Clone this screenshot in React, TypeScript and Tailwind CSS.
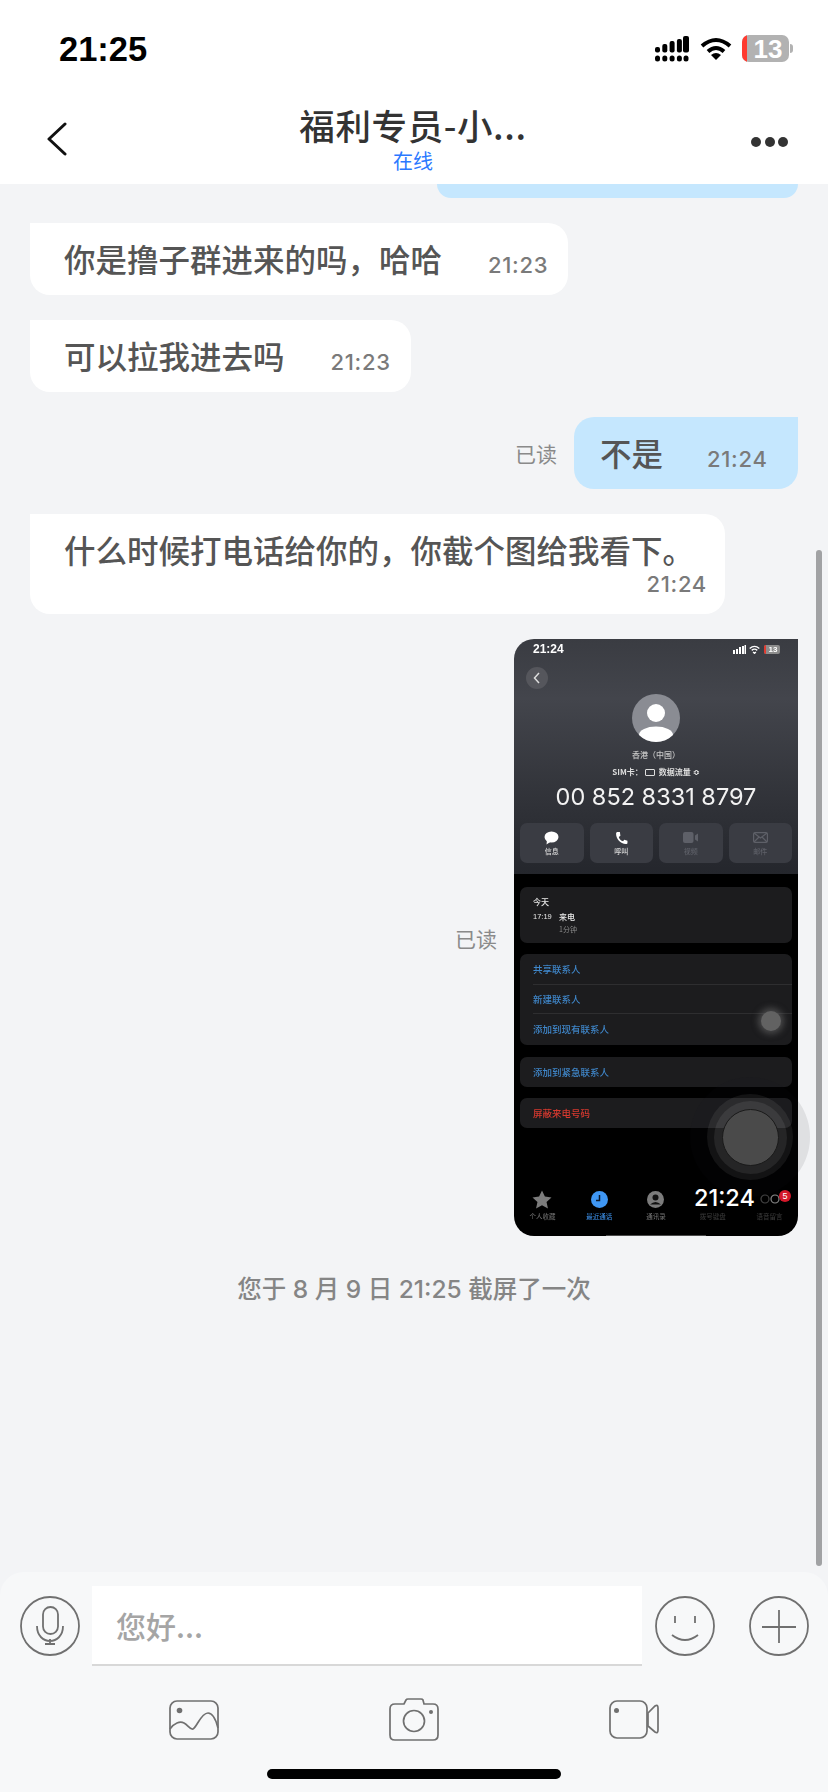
import React from "react";

const cjk = "font-['Noto_Sans_CJK_SC','Liberation_Sans',sans-serif]";

function Signal() {
  return (
    <svg width="34" height="26" viewBox="0 0 34 26" fill="#000">
      <rect x="0" y="11" width="5" height="5.5" rx="2" />
      <rect x="7.3" y="8" width="5" height="8.5" rx="2" />
      <rect x="14.6" y="5" width="5" height="11.5" rx="2" />
      <rect x="21.9" y="3" width="5" height="13.5" rx="2" />
      <rect x="28" y="0" width="6" height="16.5" rx="2" />
      <rect x="0" y="19.5" width="5" height="6" rx="2.5" />
      <rect x="7.3" y="19.5" width="5" height="6" rx="2.5" />
      <rect x="14.6" y="19.5" width="5" height="6" rx="2.5" />
      <rect x="21.9" y="19.5" width="5" height="6" rx="2.5" />
      <rect x="28.5" y="19.5" width="5" height="6" rx="2.5" />
    </svg>
  );
}

function Wifi() {
  return (
    <svg width="32" height="24" viewBox="0 0 32 24" fill="none" stroke="#000" strokeWidth="4">
      <path d="M2 9 Q16 -3 30 9" />
      <path d="M8 14.5 Q16 7.5 24 14.5" />
      <path d="M11 18 L16 23 L21 18 Q16 14 11 18 Z" fill="#000" stroke="none" />
    </svg>
  );
}

function Battery() {
  return (
    <div className="flex items-center gap-[1px]">
      <div className="flex h-[27px] w-[47px] overflow-hidden rounded-[7px] bg-[#b2b2b2]">
        <div className="h-full w-[5px] bg-[#ff3b30]" />
        <div className="flex flex-1 items-center justify-center font-['Liberation_Sans',sans-serif] text-[26px] font-bold leading-none text-white">
          13
        </div>
      </div>
      <div className="h-[9px] w-[3px] rounded-r-full bg-[#b2b2b2]" />
    </div>
  );
}

function Header() {
  return (
    <header className="h-[184px] shrink-0 bg-white">
      <div className="flex h-[100px] items-start justify-between pl-[59px] pr-[35px] pt-[35px]">
        <span className="font-['Liberation_Sans',sans-serif] text-[34.5px] font-bold leading-[28px] text-black">21:25</span>
        <div className="flex items-center">
          <Signal />
          <div className="ml-[11px] mr-[10px]">
            <Wifi />
          </div>
          <Battery />
        </div>
      </div>
      <div className="grid grid-cols-[1fr_auto_1fr] items-start pl-[41px] pr-[43px]">
        <svg width="22" height="34" viewBox="0 0 22 34" fill="none" stroke="#111" strokeWidth="3" strokeLinecap="round" strokeLinejoin="round" className="ml-[5px] mt-[22px]">
          <path d="M19 2 L3 17 L19 32" />
        </svg>
        <div className={`flex flex-col items-center ${cjk}`}>
          <div className="mt-[5px] text-[35.5px] font-medium leading-[40px] tracking-[0.6px] text-[#333333]">福利专员-小...</div>
          <div className="mt-[4px] text-[20px] leading-[24px] text-[#2a78ff]">在线</div>
        </div>
        <div className="-mr-[3px] mt-[37px] flex justify-end gap-[3.5px]">
          <span className="size-[10px] rounded-full bg-[#333333]" />
          <span className="size-[10px] rounded-full bg-[#333333]" />
          <span className="size-[10px] rounded-full bg-[#333333]" />
        </div>
      </div>
    </header>
  );
}

function Time({ children, className = "" }: { children: React.ReactNode; className?: string }) {
  return <span className={`font-['Inter','Liberation_Sans',sans-serif] text-[22px] font-medium leading-[24px] tracking-[0.7px] text-[#7a7a7a] ${className}`}>{children}</span>;
}

function LeftBubble({ text, time }: { text: string; time: string }) {
  return (
    <div className={`flex h-[72px] w-fit items-center rounded-[20px] rounded-tl-none bg-white pl-[34px] pr-[20px] ${cjk}`}>
      <span className="-mt-[2px] text-[31.5px] font-medium leading-[40px] text-[#555555]">{text}</span>
      <Time className="ml-[46px] mt-[12px]">{time}</Time>
    </div>
  );
}

function TabIcon({ label, active, faint, children }: { label: string; active?: boolean; faint?: boolean; children: React.ReactNode }) {
  return (
    <div className="flex w-[56.8px] flex-col items-center gap-[3px]">
      <div className="flex h-[20px] items-center justify-center">{children}</div>
      <span className={`text-[6.5px] leading-[9px] ${active ? "text-[#3f97f4]" : faint ? "text-[#3c3c3c]" : "text-[#777777]"}`}>{label}</span>
    </div>
  );
}

function ActionButton({ label, dim, children }: { label: string; dim?: boolean; children: React.ReactNode }) {
  return (
    <div className="flex h-[40px] flex-1 flex-col items-center justify-center gap-[2px] rounded-[7px] bg-[#3a3c43]">
      <div className="flex h-[15px] items-center justify-center">{children}</div>
      <span className={`text-[7px] font-medium leading-[9px] ${dim ? "text-[#5e6068]" : "text-[#dcdcdc]"}`}>{label}</span>
    </div>
  );
}

function Screenshot() {
  return (
    <div className="relative h-[597px] w-[284px]">
      <div className="h-full w-full overflow-hidden rounded-[20px] rounded-tr-none bg-[linear-gradient(180deg,#3a3c42_0,#43454c_60px,#303238_165px,#24262c_235px,#000000_235px)]">
        <div className={`flex h-full w-full flex-col blur-[0.4px] ${cjk}`}>
          <div className="flex h-[235px] shrink-0 flex-col px-[6px]">
            <div className="flex h-[17px] items-center justify-between pl-[13px] pr-[12px] pt-[3px]">
              <span className="font-['Liberation_Sans',sans-serif] text-[12px] font-bold leading-none text-white">21:24</span>
              <div className="flex items-center gap-[3px]">
                <svg width="13" height="9" viewBox="0 0 13 9" fill="#fff">
                  <rect x="0" y="5" width="2" height="4" /><rect x="3" y="4" width="2" height="5" /><rect x="6" y="2" width="2" height="7" /><rect x="9" y="1" width="2" height="8" /><rect x="11.5" y="0" width="1.5" height="9" />
                </svg>
                <svg width="11" height="9" viewBox="0 0 32 24" fill="none" stroke="#fff" strokeWidth="4"><path d="M2 9 Q16 -3 30 9" /><path d="M8 14.5 Q16 7.5 24 14.5" /><path d="M12 19 L16 23 L20 19" /></svg>
                <div className="ml-[1px] flex h-[9px] w-[16px] overflow-hidden rounded-[2px] bg-[#8d8d8d]">
                  <div className="h-full w-[2px] bg-[#e23a30]" />
                  <span className="flex-1 text-center font-['Liberation_Sans',sans-serif] text-[8px] font-bold leading-[9px] text-white">13</span>
                </div>
              </div>
            </div>
            <div className="ml-[6px] mt-[11px] flex size-[22px] items-center justify-center self-start rounded-full bg-[#55565c]">
              <svg width="8" height="12" viewBox="0 0 8 12" fill="none" stroke="#dddddd" strokeWidth="1.5"><path d="M6 1 L1.5 6 L6 11" /></svg>
            </div>
            <div className="mt-[5px] flex size-[48px] items-center justify-center self-center overflow-hidden rounded-full bg-[#8a8c93]">
              <svg width="48" height="48" viewBox="0 0 48 48" fill="#fff">
                <circle cx="24" cy="19" r="9" />
                <ellipse cx="24" cy="41" rx="17" ry="8.5" />
              </svg>
            </div>
            <div className="mt-[7px] text-center text-[8px] font-medium leading-[12px] text-[#c8c8c8]">香港（中国）</div>
            <div className="mt-[5px] flex items-center justify-center gap-[2px] text-[8px] font-bold leading-[12px] text-[#dedede]">
              <span>SIM卡：</span>
              <span className="h-[7px] w-[10px] rounded-[1px] border border-[#dedede]" />
              <span className="ml-[2px]">数据流量 ≎</span>
            </div>
            <div className="mt-[2px] text-center font-['Inter','Liberation_Sans',sans-serif] text-[23.5px] leading-[34px] text-[#f2f2f2]">00 852 8331 8797</div>
            <div className="mt-[9px] flex gap-[6px]">
              <ActionButton label="信息">
                <svg width="15" height="14" viewBox="0 0 15 14" fill="#fff"><ellipse cx="7.5" cy="6" rx="7" ry="5.5" /><path d="M3 9 L2.5 13.5 L7 10.5 Z" /></svg>
              </ActionButton>
              <ActionButton label="呼叫">
                <svg width="13" height="14" viewBox="0 0 24 24" fill="#fff"><path d="M5 1 L9 1 L10 8 L7 10 C8 14 11 17 15 18 L17 15 L23 17 L23 21 C23 22 22 23 20 23 C10 22 2 14 2 4 C2 2 3 1 5 1 Z" /></svg>
              </ActionButton>
              <ActionButton label="视频" dim>
                <svg width="15" height="11" viewBox="0 0 15 11" fill="#5e6068"><rect x="0" y="0" width="10.5" height="11" rx="2" /><path d="M12 3.5 L15 1.5 V9.5 L12 7.5 Z" /></svg>
              </ActionButton>
              <ActionButton label="邮件" dim>
                <svg width="15" height="11" viewBox="0 0 15 11" fill="none" stroke="#5e6068" strokeWidth="1.2"><rect x="0.6" y="0.6" width="13.8" height="9.8" rx="1.5" /><path d="M1 1 L7.5 6 L14 1 M1 10 L6 5 M14 10 L9 5" /></svg>
              </ActionButton>
            </div>
          </div>
          <div className="flex flex-1 flex-col px-[6px] pt-[13px]">
            <div className="h-[56px] rounded-[7px] bg-[#1c1c1e] pl-[13px] pt-[9px]">
              <div className="text-[8px] font-medium leading-[12px] text-[#e8e8e8]">今天</div>
              <div className="mt-[3px] flex items-center text-[7.5px] font-medium leading-[11px] text-[#e8e8e8]">
                <span className="w-[26px] font-['Liberation_Sans',sans-serif]">17:19</span>
                <span className="text-[8px]">来电</span>
              </div>
              <div className="ml-[26px] mt-[2px] text-[7px] leading-[10px] text-[#8a8a8a]">1分钟</div>
            </div>
            <div className="mt-[11px] flex h-[91px] flex-col rounded-[7px] bg-[#1c1c1e] pl-[13px] text-[9.5px] font-medium text-[#3f86c9]">
              <div className="flex h-[31px] items-center border-b border-[#2e2e30]">共享联系人</div>
              <div className="flex h-[29px] items-center border-b border-[#2e2e30]">新建联系人</div>
              <div className="flex h-[31px] items-center">添加到现有联系人</div>
            </div>
            <div className="mt-[12px] flex h-[30px] items-center rounded-[7px] bg-[#1c1c1e] pl-[13px] text-[9.5px] font-medium text-[#3f86c9]">添加到紧急联系人</div>
            <div className="mt-[11px] flex h-[30px] items-center rounded-[7px] bg-[#1c1c1e] pl-[13px] text-[9.5px] font-medium text-[#d5392f]">屏蔽来电号码</div>
            <div className="-mx-[6px] mt-[61px] flex justify-center">
              <TabIcon label="个人收藏">
                <svg width="20" height="19" viewBox="0 0 24 23" fill="#7c7c7c"><path d="M12 0.5 L15.5 8 L23.5 9 L17.5 14.5 L19.2 22.5 L12 18.5 L4.8 22.5 L6.5 14.5 L0.5 9 L8.5 8 Z" /></svg>
              </TabIcon>
              <TabIcon label="最近通话" active>
                <svg width="17" height="17" viewBox="0 0 17 17"><circle cx="8.5" cy="8.5" r="8.5" fill="#3f97f4" /><path d="M8.5 4 V9.5 H5" fill="none" stroke="#0b1a2c" strokeWidth="1.5" /></svg>
              </TabIcon>
              <TabIcon label="通讯录">
                <svg width="17" height="17" viewBox="0 0 17 17"><circle cx="8.5" cy="8.5" r="8.5" fill="#7c7c7c" /><circle cx="8.5" cy="6.5" r="3" fill="#111" /><path d="M3 13.5 Q8.5 8.5 14 13.5 Z" fill="#111" /></svg>
              </TabIcon>
              <TabIcon label="拨号键盘" faint>
                <span />
              </TabIcon>
              <TabIcon label="语音留言" faint>
                <svg width="20" height="10" viewBox="0 0 20 10" fill="none" stroke="#444" strokeWidth="1.2"><circle cx="5" cy="5" r="4" /><circle cx="15" cy="5" r="4" stroke="#888" /></svg>
              </TabIcon>
            </div>
            <div className="mx-auto mt-auto h-[1px] w-[100px] bg-[#4a4a4a]" />
          </div>
        </div>
      </div>
      <div className="absolute left-[247px] top-[372px] size-[20px] rounded-full bg-[#626262] shadow-[0_0_6px_3px_rgba(110,110,110,0.55)] blur-[0.5px]" />
      <div className="absolute left-[176px] top-[438px] flex size-[120px] items-center justify-center rounded-full bg-[rgba(20,20,35,0.09)]">
        <div className="flex size-[86px] items-center justify-center rounded-full bg-[rgba(255,255,255,0.07)]">
          <div className="flex size-[73px] items-center justify-center rounded-full bg-[rgba(255,255,255,0.08)]">
            <div className="size-[57px] rounded-full border border-[#1a1a1a] bg-[#4a4a4a]" />
          </div>
        </div>
      </div>
      <span className="absolute left-[180px] top-[544px] font-['Inter','Liberation_Sans',sans-serif] text-[23.5px] font-medium leading-[30px] text-white">21:24</span>
      <span className="absolute left-[265px] top-[551px] flex size-[12px] items-center justify-center rounded-full bg-[#d4182a] font-['Liberation_Sans',sans-serif] text-[9px] leading-none text-white">5</span>
    </div>
  );
}

function InputBar() {
  const stroke = "#707070";
  return (
    <footer className="flex h-[220px] shrink-0 flex-col rounded-t-[24px] bg-[#f7f8f9] pt-[14px]">
      <div className="flex items-start pl-[20px] pr-[21px]">
        <svg width="60" height="60" viewBox="0 0 60 60" fill="none" stroke={stroke} strokeWidth="1.8" className="mt-[10px] shrink-0">
          <circle cx="30" cy="30" r="29" />
          <rect x="23" y="11" width="15" height="27" rx="7.5" />
          <path d="M17 30 C17 50 43 50 43 30 M30 43 V48 M25 48 H35" />
        </svg>
        <div className={`ml-[12px] flex h-[80px] w-[550px] shrink-0 items-center border-b-2 border-[#d8d8d8] bg-white pl-[24px] text-[30px] font-medium text-[#a5a5a5] ${cjk}`}>您好...</div>
        <svg width="60" height="60" viewBox="0 0 60 60" fill="none" stroke={stroke} strokeWidth="1.8" className="ml-[13px] mt-[10px] shrink-0">
          <circle cx="30" cy="30" r="29" />
          <path d="M20 20 V27 M40 20 V27 M17 39 Q30 49 43 39" />
        </svg>
        <svg width="60" height="60" viewBox="0 0 60 60" fill="none" stroke={stroke} strokeWidth="1.8" className="ml-[34px] mt-[10px] shrink-0">
          <circle cx="30" cy="30" r="29" />
          <path d="M13 31 H47 M30 14 V47" />
        </svg>
      </div>
      <div className="mt-[32px] flex items-center justify-center gap-[170px]">
        <svg width="50" height="40" viewBox="0 0 50 40" fill="none" stroke={stroke} strokeWidth="1.7">
          <rect x="1" y="1" width="48" height="38" rx="7" />
          <circle cx="10.5" cy="10.5" r="2.8" fill={stroke} stroke="none" />
          <path d="M1 29 C5 23 11 21 15 23 C19 25 21 30 24 29 C28 27 32 13 39 13 C44 13 47 20 49 28" />
        </svg>
        <svg width="50" height="43" viewBox="0 0 50 43" fill="none" stroke={stroke} strokeWidth="1.7">
          <path d="M6 6 H15 L17 2 Q17.5 1 19 1 H32 Q33.5 1 34 2 L35 6 H44 Q49 6 49 11 V37 Q49 42 44 42 H6 Q1 42 1 37 V11 Q1 6 6 6 Z" />
          <circle cx="25" cy="23" r="10.5" />
          <circle cx="42" cy="14" r="2" fill={stroke} stroke="none" />
        </svg>
        <svg width="50" height="39" viewBox="0 0 50 39" fill="none" stroke={stroke} strokeWidth="1.7">
          <rect x="1" y="1" width="37" height="37" rx="7" />
          <circle cx="7.5" cy="10.5" r="2.5" fill={stroke} stroke="none" />
          <path d="M39 13 L46 6 Q49 4 49 8 V30 Q49 34 46 32 L39 26 Z" />
        </svg>
      </div>
      <div className="mt-[28px] h-[10px] w-[294px] self-center rounded-full bg-black" />
    </footer>
  );
}

export default function App() {
  return (
    <div className={`relative flex h-[1792px] w-[828px] flex-col overflow-hidden bg-[#f3f4f6] ${cjk}`}>
      <Header />
      <main className="flex flex-1 flex-col gap-[25px] pl-[30px] pr-[30px]">
        <div className="h-[14px] w-[361px] self-end rounded-b-[20px] bg-[#c5e7fe]" />
        <LeftBubble text="你是撸子群进来的吗，哈哈" time="21:23" />
        <LeftBubble text="可以拉我进去吗" time="21:23" />
        <div className="flex items-center justify-end gap-[17px]">
          <span className="text-[21px] leading-[28px] text-[#8a8a8a]">已读</span>
          <div className="flex h-[72px] w-[224px] items-center rounded-[20px] rounded-tr-none bg-[#c5e7fe] pl-[26px]">
            <span className="-mt-[2px] text-[31.5px] font-medium leading-[40px] text-[#555555]">不是</span>
            <Time className="ml-[44px] mt-[12px]">21:24</Time>
          </div>
        </div>
        <div className="flex h-[100px] w-[695px] flex-col rounded-[20px] rounded-tl-none bg-white pl-[34px] pr-[18px] pt-[15px]">
          <span className="text-[31.5px] font-medium leading-[40px] text-[#555555]">什么时候打电话给你的，你截个图给我看下。</span>
          <Time className="mt-[3px] self-end">21:24</Time>
        </div>
        <div className="flex items-center justify-end gap-[17px]">
          <span className="text-[21px] leading-[28px] text-[#8a8a8a]">已读</span>
          <Screenshot />
        </div>
        <div className="mt-[12px] text-center font-['Inter','Noto_Sans_CJK_SC',sans-serif] text-[24.5px] font-medium leading-[32px] text-[#858585]">您于 8 月 9 日 21:25 截屏了一次</div>
      </main>
      <InputBar />
      <div className="absolute left-[816px] top-[550px] h-[1016px] w-[6px] rounded-full bg-[#a1a2a4]" />
    </div>
  );
}
